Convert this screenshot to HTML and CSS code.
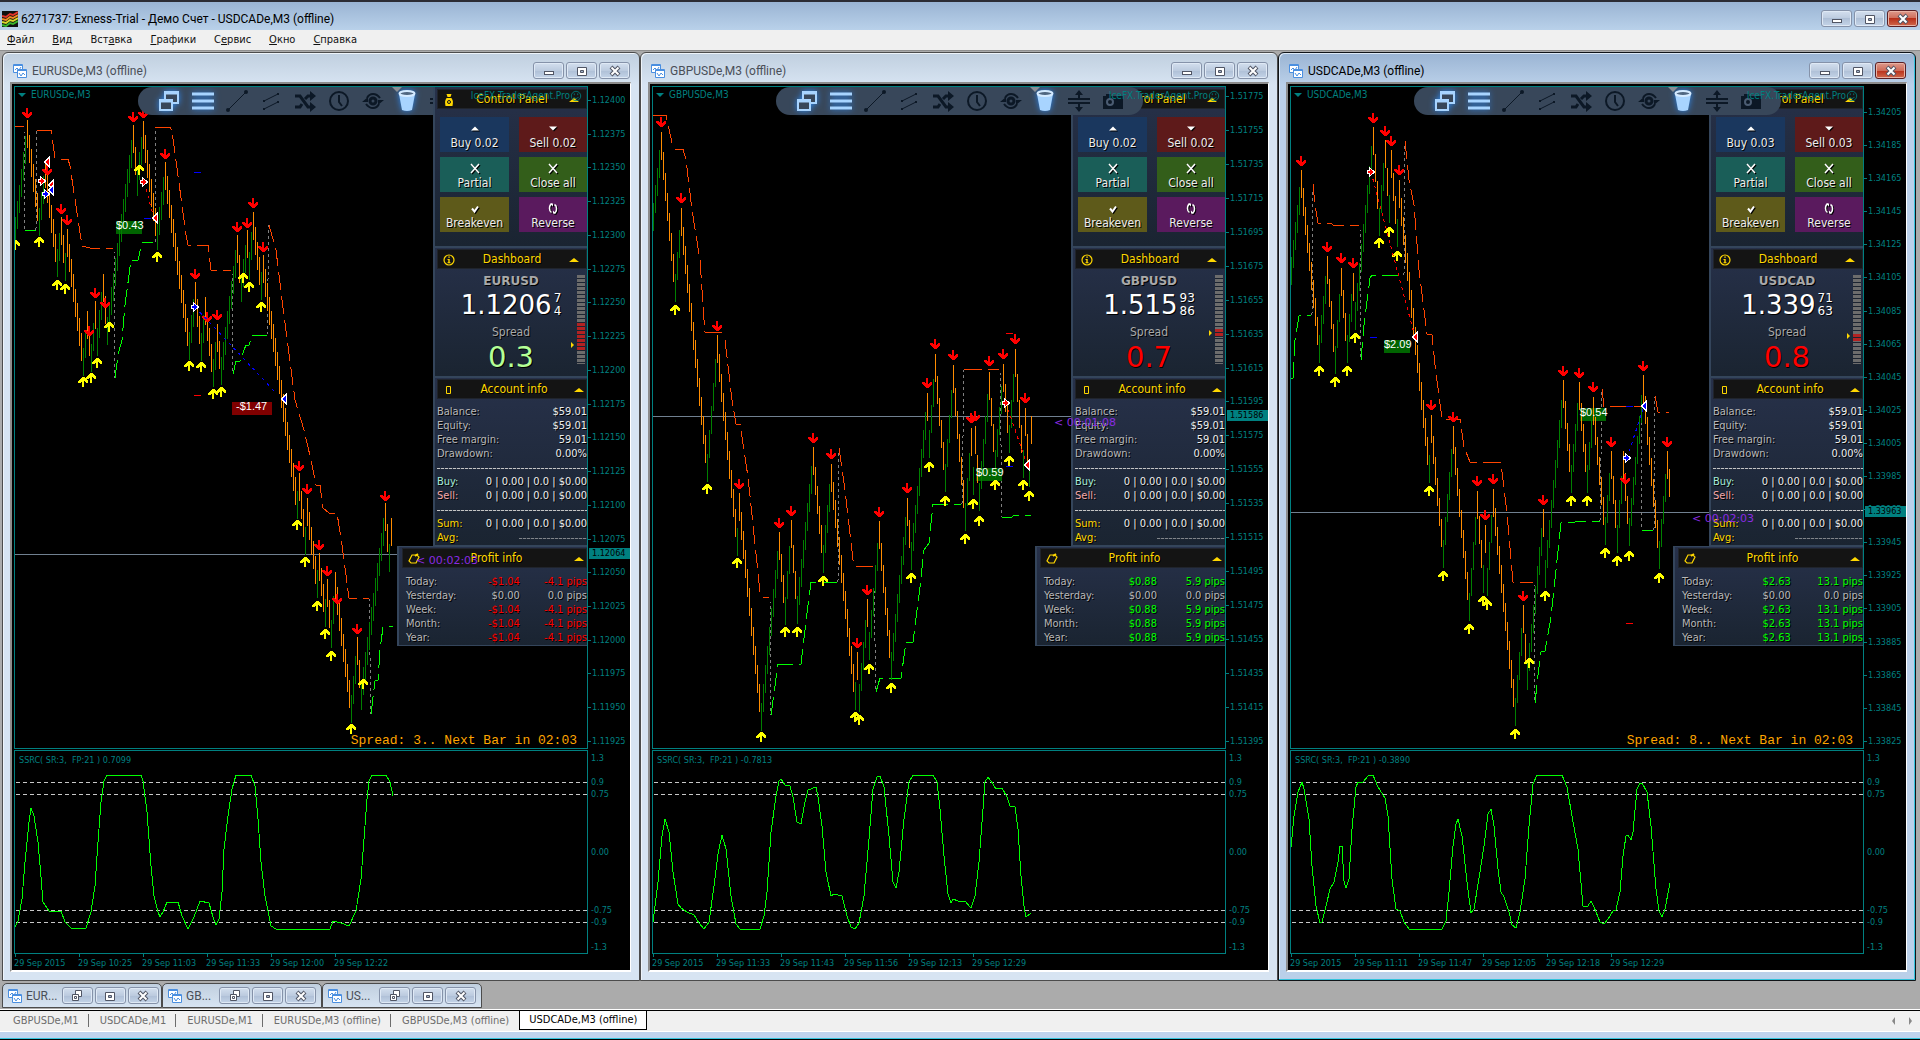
FILE: index.html
```html
<!DOCTYPE html>
<html lang="ru">
<head>
<meta charset="utf-8">
<title>6271737: Exness-Trial - Демо Счет - USDCADe,M3 (offline)</title>
<link rel="stylesheet" href="styles.css">
</head>
<body>
<svg class="defs" aria-hidden="true">
  <symbol id="i-logo" viewBox="0 0 16 16"><path d="M0 0h16v16H0z" fill="#101010"/><path d="M0 5l4 1 4-3 3 1 5-3" stroke="#e3342b"/><path d="M0 8l4 1 4-3 3 1 5-3" stroke="#f08a24"/><path d="M0 11l4 1 4-3 3 1 5-3" stroke="#d8d82a"/><path d="M0 14l4 1 4-3 3 1 5-3" stroke="#38b52c"/></symbol>
  <symbol id="i-chart" viewBox="0 0 14 14"><path d="M.5.5h9v8h-9z" fill="#fff" stroke="#4a8fe0"/><path d="M.5 1.5h9" stroke="#4a8fe0"/><path d="M2 6l2-2 2 2 2-3" stroke="#4a8fe0"/><path d="M4.500 5.500h9v8h-9z" fill="#fff" stroke="#4a8fe0"/><path d="M4.500 6.500h9" stroke="#4a8fe0"/><path d="M6 9l2 3 2-3 2 2" stroke="#4a8fe0"/></symbol>
  <symbol id="i-min" viewBox="0 0 12 12"><rect x="1.500" y="6.500" width="9" height="3" fill="#fff" stroke="#505564"/></symbol>
  <symbol id="i-max" viewBox="0 0 12 12"><path d="M1.500 2.500h9v8h-9z" fill="#fff" stroke="#505564"/><path d="M4.500 5.500h3v2h-3z" fill="#9fb0c8" stroke="#505564"/></symbol>
  <symbol id="i-restore" viewBox="0 0 12 12"><path d="M4.500.5h6v6h-6z" fill="#fff" stroke="#505564"/><path d="M1.500 4.500h6v6h-6z" fill="#fff" stroke="#505564"/><path d="M3.500 6.500h2v2h-2z" fill="none" stroke="#505564"/></symbol>
  <symbol id="i-x" viewBox="0 0 12 12"><path d="M2 2l8 8M10 2l-8 8" stroke="#505564" stroke-width="4"/><path d="M2.500 2.500l7 7M9.500 2.500l-7 7" stroke="#fff" stroke-width="2"/></symbol>
  <symbol id="t-windows" viewBox="0 0 24 24"><path d="M8 3h13v11H8z" fill="#38475a" stroke="#a8d4ff" stroke-width="2"/><path d="M8 2.500h13v3H8z" fill="#a8d4ff"/><path d="M3 11h12v10H3z" fill="#38475a" stroke="#a8d4ff" stroke-width="2"/><path d="M3 10.500h12v3H3z" fill="#a8d4ff"/></symbol>
  <symbol id="t-menu" viewBox="0 0 24 24"><path d="M1 5h22M1 12h22M1 19h22" stroke="#a8d4ff" stroke-width="3"/></symbol>
  <symbol id="t-line" viewBox="0 0 24 24"><path d="M3 21L21 3" stroke="#0c1826"/><circle cx="3" cy="21" r="2" fill="#0c1826"/><circle cx="21" cy="3" r="2" fill="#0c1826"/></symbol>
  <symbol id="t-channel" viewBox="0 0 24 24"><path d="M5 12l14-7M5 20l14-7" stroke="#0c1826"/><path d="M4 11h2v2H4zM18 4h2v2h-2zM4 19h2v2H4zM18 12h2v2h-2z" fill="#0c1826"/></symbol>
  <symbol id="t-shuffle" viewBox="0 0 24 24"><path d="M2 7h5l8 11h4M2 18h5l2-3M12 10l3-3h4" stroke="#0c1826" stroke-width="3" fill="none"/><path d="M17 2l6 5-6 5zM17 13l6 5-6 5z" fill="#0c1826"/></symbol>
  <symbol id="t-clock" viewBox="0 0 24 24"><circle cx="12" cy="12" r="9" fill="none" stroke="#0c1826" stroke-width="2"/><path d="M12 6v7l3 4" fill="none" stroke="#0c1826" stroke-width="2"/></symbol>
  <symbol id="t-eye" viewBox="0 0 24 24"><circle cx="12" cy="12" r="3" fill="none" stroke="#0c1826" stroke-width="3"/><path d="M6 9Q8 5 12 5t7 4M18 15q-2 4-6 4t-7-4" fill="none" stroke="#0c1826" stroke-width="2"/><path d="M7 8v5H1zM17 16v-5h6z" fill="#0c1826"/></symbol>
  <symbol id="t-trash" viewBox="0 0 24 24"><path d="M4 5l3 16q5 2 10 0l3-16z" fill="#a8d4ff"/><ellipse cx="12" cy="4.500" rx="7.500" ry="2.500" fill="#4f6680" stroke="#d4eaff" stroke-width="2"/></symbol>
  <symbol id="t-updown" viewBox="0 0 24 24"><path d="M1 10h22M1 14h22" stroke="#0c1826" stroke-width="2"/><path d="M12 1l4 5h-3v4h-2V6H8zM12 23l4-5h-3v-4h-2v4H8z" fill="#0c1826"/></symbol>
  <symbol id="t-camera" viewBox="0 0 24 24"><path d="M2 7h3V5h5v2h12v13H2z" fill="#0c1826"/><circle cx="9" cy="13" r="3" fill="none" stroke="#4b5c72" stroke-width="2"/></symbol>
  <symbol id="p-bag" viewBox="0 0 12 14"><path d="M3.500 1h5L7.500 4Q11 7 9.500 13h-7Q1 7 4.500 4z" fill="#ffd700"/><path d="M3.500 4.500h5" stroke="#141414"/><circle cx="6" cy="9" r="1.500" fill="none" stroke="#141414"/></symbol>
  <symbol id="p-info" viewBox="0 0 12 12"><circle cx="6" cy="6" r="5" fill="none" stroke="#ffd700" stroke-width="1.200"/><path d="M5.300 2.500h1.500v1.300H5.300zM4.500 5h2.200v3.200h.8v1h-3v-1h.8V6h-.8z" fill="#ffd700"/></symbol>
  <symbol id="p-box" viewBox="0 0 12 12"><path d="M3.500 2.500h4v7h-4z" fill="none" stroke="#ffd700"/></symbol>
  <symbol id="p-tag" viewBox="0 0 12 12"><path d="M4 2h5l2 2-3 6H3L1 8z" fill="none" stroke="#ffd700" stroke-width="1.200"/><path d="M7 3l3-2" stroke="#ffd700" stroke-width="2"/></symbol>
  <symbol id="b-check" viewBox="0 0 12 12"><path d="M3 6l2.500 3 3.500-5" fill="none" stroke="#fff" stroke-width="2"/></symbol>
  <symbol id="b-x" viewBox="0 0 12 12"><path d="M2 1.500l8 9M10 1.500l-8 9" stroke="#fff" stroke-width="1.500"/></symbol>
  <symbol id="b-up" viewBox="0 0 12 12"><path d="M2 8l4-4 4 4z" fill="#fff"/></symbol>
  <symbol id="b-down" viewBox="0 0 12 12"><path d="M2 4h8L6 8z" fill="#fff"/></symbol>
  <symbol id="b-cycle" viewBox="0 0 12 12"><path d="M5 1.500Q2.500 2 2.500 6q0 3 2 4M7 10.500Q9.500 10 9.500 6q0-3-2-4" fill="none" stroke="#fff" stroke-width="1.500"/><path d="M3 1h3v3zM9 11H6V8z" fill="#fff"/></symbol>
</svg>

<header class="app-title">
  <svg class="app-logo"><use href="#i-logo"/></svg>
  <h1>6271737: Exness-Trial - Демо Счет - USDCADe,M3 (offline)</h1>
  <div class="win-buttons">
    <button aria-label="Свернуть"><svg><use href="#i-min"/></svg></button>
    <button aria-label="Развернуть"><svg><use href="#i-max"/></svg></button>
    <button class="close" aria-label="Закрыть"><svg><use href="#i-x"/></svg></button>
  </div>
</header>
<nav class="menu">
  <a href="#"><u>Ф</u>айл</a><a href="#"><u>В</u>ид</a><a href="#">Вст<u>а</u>вка</a><a href="#"><u>Г</u>рафики</a><a href="#">С<u>е</u>рвис</a><a href="#"><u>О</u>кно</a><a href="#"><u>С</u>правка</a>
</nav>

<main class="mdi">
  <div class="windows" id="windows"></div>
  <div class="minimized" id="minimized"></div>
</main>

<footer class="tabs">
  <nav class="tab-list">
    <a href="#">GBPUSDe,M1</a><a href="#">USDCADe,M1</a><a href="#">EURUSDe,M1</a><a href="#">EURUSDe,M3 (offline)</a><a href="#">GBPUSDe,M3 (offline)</a><a href="#" class="current">USDCADe,M3 (offline)</a>
  </nav>
  <div class="tab-scroll"><button aria-label="Назад" class="prev"></button><button aria-label="Вперёд" class="next"></button></div>
</footer>
<div class="frame-bottom"></div>

<template id="minimized-template">
  <div class="mini">
    <svg class="chart-icon"><use href="#i-chart"/></svg><span>{{short}}</span>
    <div class="win-buttons">
      <button aria-label="Восстановить"><svg><use href="#i-restore"/></svg></button>
      <button aria-label="Развернуть"><svg><use href="#i-max"/></svg></button>
      <button aria-label="Закрыть"><svg><use href="#i-x"/></svg></button>
    </div>
  </div>
</template>

<template id="window-template">
  <section class="window {{state}}">
    <header class="window-title">
      <svg class="chart-icon"><use href="#i-chart"/></svg>
      <h2>{{symbol}}e,M3 (offline)</h2>
      <div class="win-buttons">
        <button aria-label="Свернуть"><svg><use href="#i-min"/></svg></button>
        <button aria-label="Развернуть"><svg><use href="#i-max"/></svg></button>
        <button class="close" aria-label="Закрыть"><svg><use href="#i-x"/></svg></button>
      </div>
    </header>
    <div class="client">
      <div class="plot">
        <svg class="price" viewBox="15 87 572 662" width="572" height="662">{{price}}</svg>
        <p class="chart-name">{{symbol}}e,M3</p>
        <i class="shift-mark"></i>
        <div class="toolbar">
          <button aria-label="Windows" class="on"><svg><use href="#t-windows"/></svg></button>
          <button aria-label="Menu" class="on"><svg><use href="#t-menu"/></svg></button>
          <button aria-label="Line"><svg><use href="#t-line"/></svg></button>
          <button aria-label="Channel"><svg><use href="#t-channel"/></svg></button>
          <button aria-label="Shuffle"><svg><use href="#t-shuffle"/></svg></button>
          <button aria-label="Time"><svg><use href="#t-clock"/></svg></button>
          <button aria-label="View"><svg><use href="#t-eye"/></svg></button>
          <button aria-label="Delete" class="on"><svg><use href="#t-trash"/></svg></button>
          <button aria-label="Spread"><svg><use href="#t-updown"/></svg></button>
          <button aria-label="Screenshot"><svg><use href="#t-camera"/></svg></button>
        </div>
        <aside class="panel">
          <section class="control">
            <h3><svg><use href="#p-bag"/></svg>Control Panel<i class="fold"></i></h3>
            <div class="actions">
              <button class="buy"><svg><use href="#b-up"/></svg>Buy {{lot}}</button>
              <button class="sell"><svg><use href="#b-down"/></svg>Sell {{lot}}</button>
              <button class="partial"><svg><use href="#b-x"/></svg>Partial</button>
              <button class="close-all"><svg><use href="#b-x"/></svg>Close all</button>
              <button class="breakeven"><svg><use href="#b-check"/></svg>Breakeven</button>
              <button class="reverse"><svg><use href="#b-cycle"/></svg>Reverse</button>
            </div>
          </section>
          <section class="dashboard">
            <h3><svg><use href="#p-info"/></svg>Dashboard<i class="fold"></i></h3>
            <div class="quote">
              <div class="quote-text">
                <strong>{{symbol}}</strong>
                <p class="rate"><span>{{rate}}</span><span class="ticks"><span>{{ask}}</span><span>{{bid}}</span></span></p>
                <p class="spread-label">Spread</p>
                <p class="spread-value {{spreadClass}}">{{spread}}</p>
              </div>
              <div class="meter"><i class="range" style="top:{{rangeTop}}px;height:{{rangeHeight}}px"></i><i class="pointer" style="top:{{pointer}}px"></i></div>
            </div>
          </section>
          <section class="account">
            <h3><svg><use href="#p-box"/></svg>Account info<i class="fold"></i></h3>
            <table>
              <tr><th>Balance:</th><td>$59.01</td></tr>
              <tr><th>Equity:</th><td>$59.01</td></tr>
              <tr><th>Free margin:</th><td>59.01</td></tr>
              <tr><th>Drawdown:</th><td>0.00%</td></tr>
              <tr class="rule"><td colspan="2"><hr></td></tr>
              <tr class="t-buy"><th>Buy:</th><td>0 | 0.00 | 0.0 | $0.00</td></tr>
              <tr class="t-sell"><th>Sell:</th><td>0 | 0.00 | 0.0 | $0.00</td></tr>
              <tr class="rule"><td colspan="2"><hr></td></tr>
              <tr class="t-sum"><th>Sum:</th><td>0 | 0.00 | 0.0 | $0.00</td></tr>
              <tr class="t-sum"><th>Avg:</th><td><hr class="short"></td></tr>
            </table>
          </section>
          <section class="profit">
            <h3><svg><use href="#p-tag"/></svg>Profit info<i class="fold"></i></h3>
            <table class="{{profitClass}}">
              <tr><th>Today:</th><td>{{profit}}</td><td>{{pips}} pips</td></tr>
              <tr class="flat"><th>Yesterday:</th><td>$0.00</td><td>0.0 pips</td></tr>
              <tr><th>Week:</th><td>{{profit}}</td><td>{{pips}} pips</td></tr>
              <tr><th>Month:</th><td>{{profit}}</td><td>{{pips}} pips</td></tr>
              <tr><th>Year:</th><td>{{profit}}</td><td>{{pips}} pips</td></tr>
            </table>
          </section>
        </aside>
        <p class="agent">IceFX.TraderAgent.Pro<svg viewBox="0 0 14 14"><circle cx="7" cy="7" r="5.500"/><path d="M4 8q3 4 6 0M5 4v2M9 4v2"/></svg></p>
        <p class="timer" style="top:{{timerTop}}px">&lt; {{timer}}</p>
        <p class="next-bar">{{nextBar}}</p>
      </div>
      <div class="price-axis {{axisClass}}"><ol>{{axis}}</ol><span class="last" style="top:{{lastTop}}px">{{last}}</span></div>
      <div class="plot indicator">
        <svg viewBox="15 752 572 202" width="572" height="202">{{wave}}</svg>
        <p class="indicator-name">SSRC( SR:3,&nbsp; FP:21 ) {{ssrc}}</p>
      </div>
      <ol class="level-axis">{{levels}}</ol>
      <ol class="time-axis">{{times}}</ol>
    </div>
  </section>
</template>
<script src="charts.js"></script>
</body>
</html>
```
FILE: styles.css
```css
* { box-sizing: border-box; }
body, h1, h2, h3, p, ol { margin: 0; padding: 0; }
ol { list-style: none; }
button { border: 0; padding: 0; margin: 0; font: inherit; color: inherit; background: none; }
a { color: inherit; text-decoration: none; }

body {
  height: 100vh;
  display: flex;
  flex-direction: column;
  overflow: hidden;
  background: #ababab;
  font: 11px/14px "DejaVu Sans Condensed", "Noto Sans", sans-serif;
}
.defs { position: absolute; width: 0; height: 0; }
#i-logo path:not(:first-child) { fill: none; stroke-width: 2; }
#i-chart path:nth-child(3), #i-chart path:nth-child(6) { fill: none; }

.app-title {
  flex: none;
  height: 30px;
  display: flex;
  align-items: center;
  gap: 3px;
  padding: 5px 2px 0;
  border-top: 2px solid #2c2c34;
  background: linear-gradient(#9ab4d3, #b9d1ea);
}
.app-logo { width: 16px; height: 16px; }
h1, h2 { font: 12px/18px Roboto, "Open Sans", sans-serif; color: #000; white-space: nowrap; }

.win-buttons { display: flex; gap: 2px; margin-left: auto; }
.win-buttons button {
  width: 31px;
  height: 17px;
  display: grid;
  place-items: center;
  border: 1px solid #8592a9;
  border-radius: 3px;
  background: linear-gradient(#d3dfee, #bccbdf 50%, #aebfd6 50%, #c4d4e8);
  box-shadow: inset 0 0 0 1px #dfe9f5;
}
.win-buttons svg { width: 12px; height: 12px; }
.app-title .win-buttons .close, .window.active .close {
  border-color: #5a1f24;
  background: linear-gradient(#dd9a8c, #cf6b58 50%, #b8301a 50%, #d0674b);
  box-shadow: inset 0 0 0 1px #e8b3a5;
}

.menu {
  flex: none;
  height: 21px;
  display: flex;
  gap: 18px;
  padding: 3px 7px 0;
  border-bottom: 1px solid #8f8f8f;
  background: #f0f0f0;
  color: #111;
}

.mdi {
  flex: 1;
  min-height: 0;
  display: flex;
  flex-direction: column;
  gap: 2px;
  padding: 1px 4px 1px 2px;
  border-bottom: 1px solid #fff;
}
.windows { flex: 1; min-height: 0; display: grid; grid-template-columns: repeat(3, minmax(0, 1fr)); }
.window {
  display: flex;
  flex-direction: column;
  min-height: 0;
  padding: 0 8px 8px 7px;
  border: 1px solid #4c4c4c;
  border-radius: 6px 6px 0 0;
  background: linear-gradient(#c0cfdf, #d7e4f2 32px);
  box-shadow: inset 1px 1px 0 #eef4fa;
}
.window.active {
  border-color: #101418;
  background: linear-gradient(#9ab4d3, #bad0e9 32px);
  box-shadow: inset -1px -1px 0 #34c3dc, inset 1px 1px 0 #dce9f7;
}
.window-title { flex: none; height: 29px; display: flex; align-items: center; gap: 5px; padding: 6px 1px 0 3px; }
.window-title h2 { color: #4a4f58; }
.window.active h2 { color: #000; }
.chart-icon { flex: none; width: 14px; height: 14px; }

.client {
  flex: 1;
  min-height: 0;
  display: grid;
  grid-template: minmax(0, 1fr) 204px 16px / minmax(0, 1fr) 42px;
  padding: 2px 0 0 2px;
  border: 2px solid #8c8c8c;
  border-right: 1px solid #fff;
  border-bottom: 2px solid #fff;
  background: #000;
  color: #008080;
  font-size: 9px;
  line-height: 12px;
}
.plot { position: relative; overflow: hidden; border: 1px solid #008080; margin-bottom: 1px; }
.plot.indicator { margin-bottom: 0; }
.plot > svg { display: block; overflow: visible; shape-rendering: crispEdges; fill: none; }
.bar-up { stroke: #008000; }
.bar-down { stroke: #ff8c00; }
.band-high { stroke: #ff4500; stroke-dasharray: 18 6; }
.band-low { stroke: #00ff00; stroke-dasharray: 18 6; }
.band-jump { stroke: #808080; stroke-dasharray: 3 3; }
.price-line { stroke: #708090; }
.peak { fill: #ff0000; }
.trough { fill: #ffff00; }
.trade-red { stroke: #ff0000; stroke-dasharray: 3 4; }
.trade-blue { stroke: #0000ff; stroke-dasharray: 3 4; }
.tick-red { stroke: #ff0000; }
.tick-blue { stroke: #0000ff; }
.deal-red, .deal-blue { stroke: #fff; stroke-width: 2; paint-order: stroke; }
.deal-red { fill: #ff0000; }
.deal-blue { fill: #0000ff; }
.gain { fill: #006400; }
.loss { fill: #800000; }
.deal-text { fill: #fff; font: 11px "Liberation Sans", sans-serif; }
.level { stroke: #c8c8c8; stroke-dasharray: 4 3; }
.wave { stroke: #00ff00; }

.chart-name, .indicator-name, .agent, .timer, .next-bar { position: absolute; white-space: nowrap; }
.chart-name { left: 3px; top: 2px; display: flex; align-items: center; gap: 5px; font-size: 10px; }
.chart-name::before { content: ""; border: 4px solid transparent; border-top-color: #008080; border-bottom: 0; }
.indicator-name { left: 4px; top: 3px; }
.shift-mark { position: absolute; z-index: 6; left: 377px; top: 0; border: 5px solid transparent; border-top-color: #8a8f96; border-bottom: 0; }
.agent { z-index: 7; right: 5px; top: 2px; display: flex; align-items: center; font: 10px/14px "DejaVu Sans Condensed", "Noto Sans", sans-serif; }
.agent svg { width: 12px; height: 12px; fill: none; stroke: #008080; }
.timer { z-index: 5; left: 401px; font: 11px/14px "DejaVu Sans", sans-serif; color: #8a2be2; }
.next-bar { right: 10px; bottom: 0; font: 13px/14px "Liberation Mono", monospace; color: #ffa500; }

.toolbar {
  position: absolute;
  z-index: 4;
  left: 123px;
  top: 0;
  height: 28px;
  display: flex;
  align-items: center;
  gap: 10px;
  padding: 0 18px 0 19px;
  border-radius: 14px;
  background: #38475a;
}
.first .toolbar { z-index: 1; }
.toolbar button, .toolbar svg { display: block; width: 24px; height: 24px; }
.toolbar .on { filter: drop-shadow(0 0 3px #2f86e8); }

.panel {
  position: absolute;
  z-index: 3;
  right: 0;
  top: 0;
  width: 154px;
  color: #b8b8b8;
  font-size: 11px;
  line-height: 14px;
  text-shadow: 1px 1px 0 #000;
}
.panel section {
  border-left: 2px solid #34455b;
  border-bottom: 2px solid #34455b;
  padding: 1px 0 0 2px;
  background: linear-gradient(#27314a, #1a2431);
  overflow: hidden;
}
h3 {
  position: relative;
  height: 20px;
  border: 1px solid #20242c;
  background: #141414;
  color: #ffd700;
  font: 12px/18px "DejaVu Sans Condensed", "Noto Sans", sans-serif;
  text-align: center;
}
h3 svg { position: absolute; left: 5px; top: 3px; width: 12px; height: 14px; }
.fold { position: absolute; right: 7px; top: 8px; border: 5px solid transparent; border-bottom: 4px solid #ffd700; border-top: 0; }
.account h3, .profit h3 { padding-left: 4px; }
.account .fold, .profit .fold { right: 2px; }
.panel .control { height: 161px; padding-top: 2px; }
.actions { display: grid; grid-template-columns: 69px 1fr; grid-auto-rows: 35px; gap: 5px 10px; padding: 8px 0 0 3px; }
.actions button { display: flex; flex-direction: column; align-items: center; padding-top: 5px; color: #ededed; font-size: 12px; line-height: 16px; text-shadow: inherit; white-space: nowrap; }
.actions svg { width: 12px; height: 13px; filter: drop-shadow(1px 1px 0 #000); }
.buy { background: #1a375e; }
.sell { background: #5e1a1a; }
.partial { background: #1a5e58; }
.close-all { background: #335e1a; }
.breakeven { background: #5e5a1a; }
.reverse { background: #5a1a5e; }

.panel .dashboard { height: 130px; }
.quote { display: flex; justify-content: space-between; padding: 5px 2px 0 8px; }
.quote-text { flex: 1; text-align: center; }
.quote-text strong { display: block; font: bold 12px/14px "DejaVu Sans", sans-serif; color: #a9a9a9; }
.rate { display: flex; justify-content: center; gap: 2px; color: #fff; font: 26px/34px "DejaVu Sans", sans-serif; }
.ticks { display: flex; flex-direction: column; justify-content: center; font: 12px/13px "DejaVu Sans", sans-serif; }
.spread-label { color: #a9a9a9; font-size: 12px; line-height: 20px; }
.spread-value { font: 29px/30px "DejaVu Sans", sans-serif; }
.good { color: #b4ff96; }
.bad { color: #ff0000; }
.meter { position: relative; width: 8px; height: 89px; margin-top: 1px; background: repeating-linear-gradient(#6c6c6c 0 3px, #1c2431 3px 4px); }
.range { position: absolute; left: 0; width: 8px; background: repeating-linear-gradient(#b22222 0 3px, #1c2431 3px 4px); }
.pointer { position: absolute; left: -6px; border: 3px solid transparent; border-left-color: #ffd700; border-right: 0; }

.panel .account { height: 169px; }
table { width: 100%; border-collapse: collapse; margin-top: 7px; }
th, td { padding: 0; height: 14px; font-weight: normal; white-space: nowrap; }
th { text-align: left; }
td { text-align: right; color: #ededed; }
.account table { table-layout: fixed; margin-top: 6px; }
.account th { width: 34px; }
hr { margin: 0; border: 0; height: 1px; background: repeating-linear-gradient(90deg, #c4c4c4 0 3px, #3a4454 3px 4px); }
.short { width: 68px; margin-left: auto; opacity: 0.6; }
.t-buy th { color: #a6ecd9; }
.t-sell th { color: #f5a9a9; }
.t-sum th { color: #ffd700; }

.panel .profit { width: 190px; height: 100px; margin-left: -36px; margin-top: -1px; border-top: 1px solid #34455b; border-bottom-width: 1px; }
.profit h3 { margin-left: 1px; }
.profit table { width: 181px; margin-left: 5px; }
.profit th { width: 64px; }
.loss-table td { color: #ff0000; }
.gain-table td { color: #00ff00; }
.profit .flat td { color: #b8b8b8; }

.price-axis { position: relative; }
.price-axis ol { height: 100%; display: flex; flex-direction: column; justify-content: space-between; padding: 8px 0 3px; }
.axis-b ol { padding-top: 4px; }
.axis-c ol { padding-top: 20px; }
.price-axis li, .level-axis li { padding-left: 4px; }
.price-axis li::before { content: ""; float: left; width: 3px; margin: 6px 0 0 -4px; border-top: 1px solid #008080; }
.last { position: absolute; left: 1px; right: 0; padding-left: 3px; line-height: 11px; background: #008080; color: #000; }
.level-axis { position: relative; }
.level-axis li { position: absolute; left: 0; padding-left: 3px; }
.time-axis { display: flex; }
.time-axis li { width: 64px; flex: none; white-space: nowrap; line-height: 14px; padding-top: 2px; position: relative; }
.time-axis li::before { content: ""; position: absolute; left: 1px; top: 0; height: 3px; border-left: 1px solid #008080; }

.minimized { flex: none; display: flex; }
.mini {
  width: 160px;
  height: 25px;
  display: flex;
  align-items: center;
  gap: 4px;
  padding: 0 5px;
  border: 1px solid #4c4c4c;
  border-radius: 5px 5px 0 0;
  background: linear-gradient(#c0cfdf, #d7e4f2);
  font: 12px/18px Roboto, "Open Sans", sans-serif;
  color: #4a4f58;
}

.tabs {
  flex: none;
  height: 22px;
  display: flex;
  justify-content: space-between;
  border-top: 1px solid #000;
  border-bottom: 1px solid #fff;
  background: #f0f0f0;
  color: #6d6d6d;
}
.tab-list { display: flex; padding: 0 0 1px 2px; }
.tab-list a { position: relative; padding: 3px 10px 0 11px; white-space: nowrap; }
.tab-list a:not(.current):not(:nth-last-child(2))::after { content: ""; position: absolute; right: 0; top: 3px; height: 13px; border-right: 1px solid #6d6d6d; }
.tab-list .current { padding: 2px 9px 0; border: 1px solid #000; border-top: 0; background: #fff; color: #000; }
.tab-scroll { display: flex; align-items: center; gap: 14px; padding-right: 8px; }
.tab-scroll button { border: 4px solid transparent; }
.tab-scroll .prev { border-right: 3px solid #888; border-left: 0; }
.tab-scroll .next { border-left: 3px solid #888; border-right: 0; }
.frame-bottom { flex: none; height: 8px; background: #bed3ee; border-bottom: 1px solid #000; box-shadow: inset 0 -1px 0 #34c3dc; }
```
FILE: charts.js
```js
// Pivots are [x, y] pairs; the bars between two pivots are filled in on a 2px step.
const charts = [
  {
    symbol: 'EURUSD', short: 'EUR...', state: 'first', lot: '0.02', rate: '1.1206', ask: '7', bid: '4',
    spread: '0.3', spreadClass: 'good', rangeTop: 48, rangeHeight: 27, pointer: 67,
    profit: '-$1.04', pips: '-4.1', profitClass: 'loss-table', timer: '00:02:03', lineY: 554,
    nextBar: 'Spread: 3.. Next Bar in 02:03', last: '1.12064', ssrc: '0.7099', axisClass: 'axis-a',
    axisStart: 1.124, axisStep: 0.00025, times: ['2015', '10:25', '11:03', '11:33', '12:00', '12:22'],
    pivots: [15,245,27,120,39,236,45,160,57,277,61,217,65,281,67,229,83,376,87,311,91,372,95,301,97,356,103,274,107,345,133,125,137,196,143,121,157,250,165,162,189,360,195,282,201,361,205,297,213,387,217,324,221,385,237,235,241,302,247,230,249,280,253,212,261,300,263,255,297,519,299,473,305,555,307,498,317,598,319,553,325,627,327,579,331,648,335,572,351,723,357,637,361,710,385,503,389,572,391,518,393,574],
    peaks: [27,113,47,170,61,209,67,220,89,331,95,293,105,303,133,117,143,113,165,154,195,274,207,317,217,315,237,227,247,223,253,203,263,247,299,466,307,489,319,545,327,571,337,599,357,629,385,496],
    troughs: [15,245,39,242,57,285,65,289,83,382,91,378,97,363,109,327,139,170,157,257,189,366,201,367,213,394,221,392,243,278,249,287,261,307,297,525,305,562,317,606,325,634,331,656,351,729,363,684],
    high: ['15,126 24,126', '37,130 51,130 55,158 60,159 68,159 70,166 82,246 90,248 113,248', '155,127 170,127 172,131 186,235 188,245 208,245 211,270 231,270', '269,225 276,250 282,300 295,400 304,430 311,460 316,485 320,485 323,508 329,513 337,513 342,545 349,598 369,598'],
    low: ['25,230 36,230', '115,378 118,355 122,340 125,305 131,260 138,260 142,243 153,242', '233,374 236,361 240,361 246,345 249,345 252,335 267,335', '371,714 375,681 378,680 380,650 383,627 393,626'],
    jump: ['24,130 25,230', '36,230 37,130', '114,250 115,378', '155,242 155,128', '232,272 233,374', '267,335 269,225', '369,598 371,714'],
    trades: [['blue', '195,307 277,394'], ['red', '144,182 154,218']],
    ticks: [['blue', 194, 172], ['blue', 144, 218], ['red', 144, 104], ['red', 194, 395]],
    deals: [['red', 47, 162, 1], ['red', 42, 181], ['red', 51, 185, 1], ['blue', 46, 194], ['blue', 51, 190, 1], ['red', 144, 182], ['red', 155, 218, 1], ['blue', 195, 307], ['blue', 284, 399, 1]],
    tags: [['gain', 116, 221, 26, '$0.43', 0], ['loss', 232, 402, 40, '-$1.47', 4]],
    wave: '15,928 18,922 22,900 25,863 29,823 31,809 34,817 38,843 41,878 43,903 49,912 61,912 65,923 71,929 78,930 86,929 91,913 95,887 98,843 101,803 104,782 107,776 141,776 143,782 147,813 151,867 154,897 158,913 160,918 163,913 167,903 178,903 182,917 188,930 194,918 200,902 209,904 213,918 216,926 219,920 222,893 224,850 228,817 232,790 236,776 251,776 255,787 258,820 261,863 265,897 269,917 271,927 276,930 330,930 333,922 341,924 349,927 356,912 361,880 364,840 367,800 369,782 372,776 386,776 390,783 393,797'
  },
  {
    symbol: 'GBPUSD', short: 'GB...', state: '', lot: '0.02', rate: '1.515', ask: '93', bid: '86',
    spread: '0.7', spreadClass: 'bad', rangeTop: 54, rangeHeight: 8, pointer: 55,
    profit: '$0.88', pips: '5.9', profitClass: 'gain-table', timer: '00:01:08', lineY: 416,
    nextBar: '', last: '1.51586', ssrc: '-0.7813', axisClass: 'axis-b',
    axisStart: 1.51775, axisStep: 0.0002, times: ['2015', '11:33', '11:43', '11:56', '12:13', '12:29'],
    pivots: [15,231,23,132,37,302,43,208,69,482,79,335,99,556,101,493,123,731,141,532,147,625,153,520,159,624,175,447,185,573,193,464,217,710,219,652,221,712,229,599,231,660,241,521,253,680,269,498,273,570,289,393,291,458,297,354,307,492,315,365,327,531,333,428,335,495,337,426,341,511,351,372,357,478,365,364,371,453,377,349,385,478,387,408,391,487,393,416,395,452],
    peaks: [23,122,43,198,79,326,101,484,141,523,153,511,175,438,193,454,219,643,229,590,241,512,269,488,289,383,297,344,315,355,333,418,337,416,351,361,365,354,377,339,387,398],
    troughs: [37,310,69,489,99,563,123,737,147,632,159,632,185,581,217,717,221,720,231,669,253,688,273,578,291,467,307,501,327,539,335,504,341,521,357,485,371,461,385,485,391,496],
    high: ['15,115 28,115 34,143', '37,149 45,149 48,160 54,210 62,260 66,320 67,332 86,332', '87,340 94,400 98,424 102,424 110,477 122,592 124,597 131,597', '201,448 207,490 215,560 217,566 235,566', '326,369 361,369'],
    low: ['133,715 140,664 163,664 169,613 173,582 199,582', '238,692 242,678 263,678 268,642 275,642 282,587 286,550 291,543 295,504 323,504', '364,517 374,517 376,515 393,515'],
    jump: ['132,600 133,715', '200,582 201,450', '236,590 238,692', '324,504 326,370', '362,372 364,517'],
    trades: [['red', '368,403 389,465']],
    ticks: [['red', 368, 333], ['blue', 368, 466]],
    deals: [['red', 368, 403], ['red', 389, 465, 1]],
    tags: [['gain', 338, 468, 26, '$0.59', 0]],
    wave: '15,923 20,883 24,837 27,820 31,833 35,873 40,905 43,909 49,913 56,916 61,924 66,930 71,923 76,887 80,855 84,836 88,850 93,897 98,925 102,930 122,930 126,917 129,893 133,833 138,797 141,782 143,780 147,786 152,787 155,798 159,823 163,825 167,803 170,791 178,788 180,798 184,827 188,873 193,897 196,895 204,897 209,917 213,928 217,930 221,924 226,897 231,840 235,790 239,778 242,777 246,788 251,837 255,883 258,889 261,873 266,820 271,783 275,776 295,776 299,783 302,810 306,857 310,895 313,904 315,900 320,902 327,902 333,909 337,897 341,863 345,810 347,783 350,778 353,782 358,790 364,789 369,798 372,807 377,808 380,830 383,877 386,907 388,918 393,914'
  },
  {
    symbol: 'USDCAD', short: 'US...', state: 'active', lot: '0.03', rate: '1.339', ask: '71', bid: '63',
    spread: '0.8', spreadClass: 'bad', rangeTop: 59, rangeHeight: 7, pointer: 58,
    profit: '$2.63', pips: '13.1', profitClass: 'gain-table', timer: '00:02:03', lineY: 512,
    nextBar: 'Spread: 8.. Next Bar in 02:03', last: '1.33963', ssrc: '-0.3890', axisClass: 'axis-c',
    axisStart: 1.34205, axisStep: 0.0002, times: ['2015', '11:11', '11:47', '12:05', '12:18', '12:29'],
    pivots: [15,285,25,170,43,363,51,256,59,374,65,268,71,363,77,273,79,330,97,127,103,236,109,140,113,223,115,150,121,247,123,180,153,483,155,415,167,568,177,426,193,621,201,491,207,593,209,525,211,596,217,489,239,726,247,605,251,690,267,509,269,588,287,380,295,493,303,382,311,493,317,397,329,545,335,451,341,553,347,451,353,546,367,375,383,569,391,451,395,515],
    peaks: [25,161,51,247,65,258,77,263,97,118,109,131,115,141,123,170,155,405,177,417,201,481,209,515,217,479,247,596,267,500,287,371,303,373,317,387,335,442,349,479,367,366,391,442],
    troughs: [43,371,59,382,71,371,79,338,103,243,113,232,121,256,153,491,167,576,193,629,207,601,211,605,239,734,253,663,269,596,295,501,311,501,329,553,341,561,353,556,383,578],
    high: ['37,184 39,205 42,223 55,223 57,225 83,225', '129,141 133,180 138,205 143,270 148,310 151,334 156,335 159,365 166,419 184,419 188,447 194,462 224,462 226,472 231,513 237,582 257,582', '326,389 328,407', '334,406 365,406', '379,396 382,412 393,412'],
    low: ['15,378 17,378 19,340 23,316 35,315', '85,360 88,325 94,278 96,275 123,275', '259,703 262,675 265,652 269,651 275,617 280,570 285,523 299,522 324,521', '366,530 377,530'],
    jump: ['36,315 37,190', '84,228 85,360', '128,275 129,145', '258,583 259,703', '324,521 326,390', '365,410 366,530', '378,530 379,397'],
    trades: [['red', '95,172 139,337'], ['blue', '351,458 368,406']],
    ticks: [['blue', 94, 337], ['red', 350, 623], ['blue', 350, 406]],
    deals: [['red', 95, 172], ['red', 139, 337, 1], ['blue', 351, 458], ['blue', 368, 406, 1]],
    tags: [['gain', 108, 340, 26, '$2.09', 0], ['gain', 304, 408, 26, '$0.54', 0]],
    wave: '15,848 18,817 22,793 26,783 28,790 33,820 36,867 40,907 44,924 46,923 50,907 54,890 58,883 62,863 64,847 66,847 68,882 70,889 73,880 76,830 80,788 82,783 87,783 92,777 97,776 102,788 109,799 112,817 116,880 120,910 124,912 128,923 133,930 166,930 170,922 173,893 177,847 180,825 182,820 186,837 191,883 195,914 198,910 204,873 208,847 212,815 215,810 218,827 222,870 225,893 228,898 233,913 236,926 240,929 244,913 249,880 253,827 257,785 261,776 286,776 291,788 296,817 302,850 307,907 312,907 315,902 318,908 324,923 328,925 332,920 337,912 340,911 344,893 347,857 350,837 352,836 355,841 357,833 361,790 364,784 366,784 371,793 375,827 380,890 383,912 386,918 389,910 394,884'
  }
];

const pairs = list => list.reduce((out, v, i) => (i % 2 ? out[out.length - 1].push(v) : out.push([v]), out), []);

function bars(pivots) {
  const height = 28;
  let up = '', down = '';
  for (let i = 0; i < pivots.length - 1; i++) {
    const [x0, y0] = pivots[i], [x1, y1] = pivots[i + 1];
    const rising = y1 < y0;
    const h = Math.min(height, Math.abs(y1 - y0));
    const travel = y1 - y0 + (rising ? h : -h);
    const count = (x1 - x0) / 2;
    for (let k = 0; k < count; k++) {
      const y = Math.round(y0 + travel * k / count);
      const seg = `M${x0 + 2 * k}.5 ${y}v${rising ? -h : h}`;
      if (rising) up += seg; else down += seg;
    }
  }
  return `<path class="bar-up" d="${up}"/><path class="bar-down" d="${down}"/>`;
}

const lines = (cls, list) => list.map(p => `<polyline class="${cls}" points="${p}"/>`).join('');
const arrows = (cls, list, shape) => pairs(list).map(([x, y]) => `<path class="${cls}" transform="translate(${x} ${y})" d="${shape}"/>`).join('');
const arrowDown = 'M-1-5H1V1L3-1H5V1L1 5H-1L-5 1V-1H-3L-1 1Z';
const arrowUp = 'M-1 5H1V-1L3 1H5V-1L1-5H-1L-5-1V1H-3L-1-1Z';

function priceSvg(c) {
  return `<path class="price-line" d="M15 ${c.lineY}.5H3000"/>` +
    lines('band-jump', c.jump) + lines('band-high', c.high) + lines('band-low', c.low) +
    c.tags.map(([k, x, y, w]) => `<rect class="${k}" x="${x}" y="${y}" width="${w}" height="13"/>`).join('') +
    bars(pairs(c.pivots)) +
    arrows('peak', c.peaks, arrowDown) + arrows('trough', c.troughs, arrowUp) +
    c.trades.map(([k, p]) => `<polyline class="trade-${k}" points="${p}"/>`).join('') +
    c.ticks.map(([k, x, y]) => `<path class="tick-${k}" d="M${x} ${y}.5h7"/>`).join('') +
    c.deals.map(([k, x, y, end]) => `<path class="deal-${k}" transform="translate(${x} ${y})" d="${end ? 'M2-4V4L-2 0Z' : 'M-3-1H-1V-3L3 0L-1 3V1H-3Z'}"/>`).join('') +
    c.tags.map(([, x, y, , t, pad]) => `<text class="deal-text" x="${x + pad}" y="${y + 8}">${t}</text>`).join('');
}

function waveSvg(c) {
  return [783, 795, 911, 923].map(y => `<path class="level" d="M16 ${y}.5H3000"/>`).join('') +
    `<polyline class="wave" points="${c.wave}"/>`;
}

const levels = [['1.3', 2], ['0.9', 26], ['0.75', 38], ['0.00', 96], ['-0.75', 154], ['-0.9', 166], ['-1.3', 191]];
const fill = (id, data) => document.getElementById(id).innerHTML.replace(/\{\{(\w+)\}\}/g, (m, key) => data[key]);

for (const c of charts) {
  c.price = priceSvg(c);
  c.wave = waveSvg(c);
  c.timerTop = c.lineY - 87;
  c.lastTop = c.lineY - 92;
  c.axis = Array.from({ length: 20 }, (_, i) => `<li>${(c.axisStart - i * c.axisStep).toFixed(5)}</li>`).join('');
  c.levels = levels.map(([t, y]) => `<li style="top:${y}px">${t}</li>`).join('');
  c.times = c.times.map(t => `<li>29 Sep ${t}</li>`).join('');
}
document.getElementById('windows').innerHTML = charts.map(c => fill('window-template', c)).join('');
document.getElementById('minimized').innerHTML = charts.map(c => fill('minimized-template', c)).join('');
```
